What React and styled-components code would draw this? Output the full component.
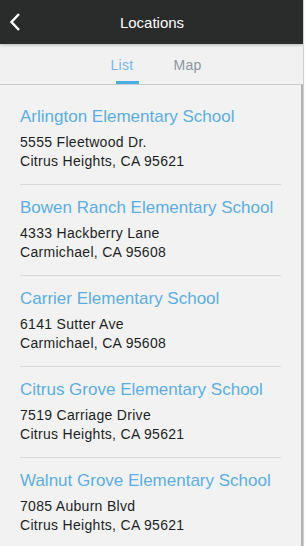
import React, {useState} from 'react'
import styled, {createGlobalStyle} from 'styled-components'

const schools = [
  {name: 'Arlington Elementary School', street: '5555 Fleetwood Dr.', city: 'Citrus Heights, CA 95621'},
  {name: 'Bowen Ranch Elementary School', street: '4333 Hackberry Lane', city: 'Carmichael, CA 95608'},
  {name: 'Carrier Elementary School', street: '6141 Sutter Ave', city: 'Carmichael, CA 95608'},
  {name: 'Citrus Grove Elementary School', street: '7519 Carriage Drive', city: 'Citrus Heights, CA 95621'},
  {name: 'Walnut Grove Elementary School', street: '7085 Auburn Blvd', city: 'Citrus Heights, CA 95621'}
]

const GlobalStyle = createGlobalStyle`
  html, body {
    margin: 0;
    padding: 0;
    background: #fafafa;
    font-family: "Liberation Sans", Arial, sans-serif;
  }
`

const Page = styled.div`
  width: 303px;
  height: 546px;
  overflow: hidden;
  background: #f1f1f1;
  border-right: 1px solid #cfcfcf;
  display: flex;
  flex-direction: column;
`

const Header = styled.header`
  position: relative;
  height: 44px;
  flex: none;
  background: #2a2b2b;
  color: #fff;
  display: flex;
  align-items: center;
  justify-content: center;
  box-shadow: 0 1px 3px rgba(0, 0, 0, 0.25);
  z-index: 1;
`

const Title = styled.h1`
  margin: 0;
  font-size: 15px;
  font-weight: normal;
  padding-left: 1px;
`

const BackButton = styled.button`
  position: absolute;
  left: 6px;
  top: 11px;
  width: 18px;
  height: 22px;
  padding: 0;
  border: 0;
  background: none;
  display: flex;
  align-items: center;
  justify-content: center;
`

const Tabs = styled.nav`
  height: 40px;
  flex: none;
  display: flex;
  justify-content: center;
  gap: 39px;
  padding-left: 8px;
`

const Tab = styled.button`
  position: relative;
  border: 0;
  background: none;
  padding: 0 0 0 1px;
  margin-top: 1px;
  font-family: inherit;
  font-size: 14px;
  letter-spacing: 0.3px;
  color: ${p => (p.active ? '#72b8e8' : '#8d96a3')};
  display: flex;
  align-items: center;

  &::after {
    content: '';
    display: ${p => (p.active ? 'block' : 'none')};
    position: absolute;
    left: 50%;
    bottom: 0;
    width: 23px;
    height: 3px;
    margin-left: -5px;
    background: #49ade2;
  }
`

const Panel = styled.section`
  flex: 1;
  border-top: 1px solid #c6ccd0;
  border-right: 2px solid #b3b3b3;
  background: #f2f2f2;
  padding-top: 9px;
`

const Item = styled.article`
  margin: 0 20px;
  padding: 13px 0;
  border-bottom: 1px solid #d9d9d9;
`

const Name = styled.a`
  display: block;
  font-size: 17px;
  line-height: 20px;
  color: #5aaee6;
  text-decoration: none;
  margin-bottom: 6px;
  white-space: nowrap;
`

const Line = styled.div`
  font-size: 14px;
  line-height: 19px;
  letter-spacing: 0.3px;
  color: #1c1f26;
`

export default function App() {
  const [tab, setTab] = useState('list')
  return (
    <Page>
      <GlobalStyle />
      <Header>
        <BackButton aria-label="Back">
          <svg width="12" height="20" viewBox="0 0 12 20">
            <path d="M10 2 L2.5 10 L10 18" fill="none" stroke="#fff" strokeWidth="2.4" />
          </svg>
        </BackButton>
        <Title>Locations</Title>
      </Header>
      <Tabs>
        <Tab active={tab === 'list'} onClick={() => setTab('list')}>List</Tab>
        <Tab active={tab === 'map'} onClick={() => setTab('map')}>Map</Tab>
      </Tabs>
      <Panel>
        {schools.map((s, i) => (
          <Item key={i}>
            <Name href="#">{s.name}</Name>
            <Line>{s.street}</Line>
            <Line>{s.city}</Line>
          </Item>
        ))}
      </Panel>
    </Page>
  )
}
